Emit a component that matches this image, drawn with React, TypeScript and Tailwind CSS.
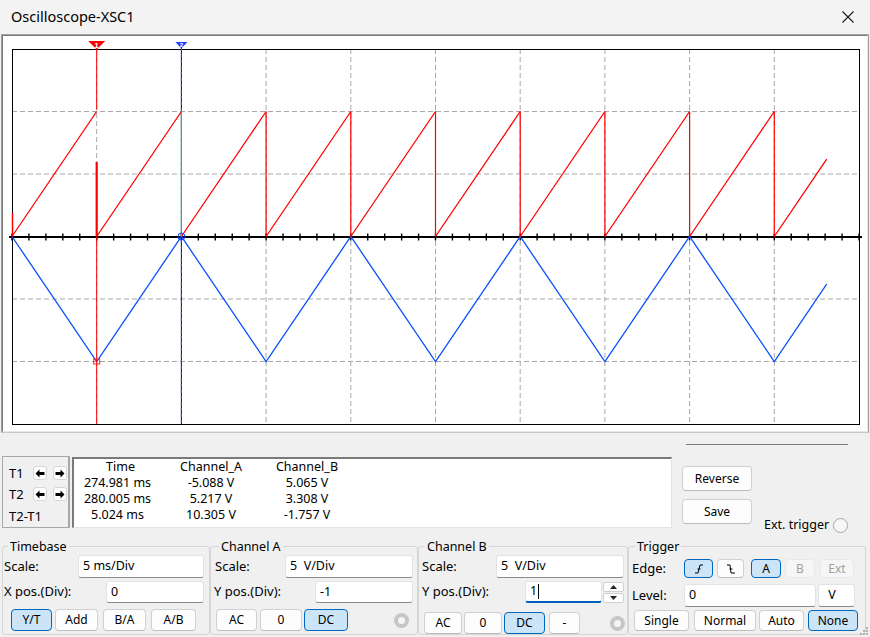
import React from "react";
import clsx from "clsx";

// plot geometry, page pixels
const X0 = 12;
const Y0 = 49;
const PW = 847;
const PH = 375;
const DX = PW / 10;
const DY = PH / 6;
const AXIS = Y0 + 3 * DY;
const PEAK = AXIS - 2 * DY;
const TROUGH = AXIS + 2 * DY;
const END_X = 826.7;
const gx = (i: number) => X0 + i * DX;

const readout = [
  ["274.981 ms", "-5.088 V", "5.065 V"],
  ["280.005 ms", "5.217 V", "3.308 V"],
  ["5.024 ms", "10.305 V", "-1.757 V"],
];

function Scope() {
  const tail = ((END_X - gx(9)) / DX) * 2 * DY;
  const ramps = Array.from({ length: 9 }, (_, k) => `M${gx(k)} ${AXIS} L${gx(k + 1)} ${PEAK}`).join(" ") +
    ` M${gx(9)} ${AXIS} L${END_X} ${AXIS - tail}`;
  const drops = [3, 4, 5, 6, 7, 8, 9].map((k) => `M${gx(k)} ${PEAK} L${gx(k)} ${AXIS}`).join(" ");
  const tri = Array.from({ length: 10 }, (_, i) => `${gx(i)},${i % 2 ? TROUGH : AXIS}`).join(" ") +
    ` ${END_X},${TROUGH - tail}`;

  return (
    <svg width={864} height={395} viewBox="3 36 864 395" className="block">
      <rect x={3} y={36} width={864} height={395} fill="#fff" />
      {[1, 2, 3, 4, 5, 6, 7, 8, 9].map((i) => (
        <line key={"v" + i} x1={gx(i)} y1={Y0} x2={gx(i)} y2={Y0 + PH} stroke="#a8a8a8" strokeDasharray="5 3" />
      ))}
      {[1, 2, 4, 5].map((j) => (
        <line key={"h" + j} x1={X0} y1={Y0 + j * DY} x2={X0 + PW} y2={Y0 + j * DY} stroke="#a8a8a8" strokeDasharray="5 3" />
      ))}
      <rect x={12.5} y={49.5} width={PW} height={PH} fill="none" stroke="#000" />
      <line x1={9} y1={AXIS + 0.5} x2={862} y2={AXIS + 0.5} stroke="#000" strokeWidth={2} />
      {Array.from({ length: 51 }, (_, i) => (
        <line key={"t" + i} x1={X0 + (i * DX) / 5} y1={233.5} x2={X0 + (i * DX) / 5} y2={240.5} stroke="#000" strokeWidth={1.4} />
      ))}

      {/* channel B */}
      <polyline points={tri} fill="none" stroke="#0a50ff" strokeWidth={1.3} />
      {/* channel A */}
      <path d={ramps} fill="none" stroke="#ff0000" strokeWidth={1.3} />
      <path d={drops} fill="none" stroke="#ff0000" strokeWidth={1.2} />
      <line x1={X0 + 0.5} y1={213} x2={X0 + 0.5} y2={AXIS} stroke="#ff0000" strokeWidth={1.5} />

      {/* cursor 2 */}
      <line x1={gx(2)} y1={48} x2={gx(2)} y2={Y0 + PH} stroke="#10104a" />
      <line x1={gx(2)} y1={48} x2={gx(2)} y2={Y0 + PH} stroke="#2a4dff" strokeDasharray="3 3" />
      <line x1={gx(2)} y1={PEAK - 1} x2={gx(2)} y2={AXIS} stroke="#22dd22" />
      <circle cx={gx(2)} cy={AXIS} r={3.5} fill="none" stroke="#1040ff" />
      <polygon points={`${gx(2) - 6},42 ${gx(2) + 6},42 ${gx(2)},48.5`} fill="#2040ff" />
      <text x={gx(2)} y={47} fontSize={6} fill="#fff" textAnchor="middle" fontFamily="Liberation Sans" fontWeight="bold">2</text>

      {/* cursor 1 */}
      <line x1={gx(1)} y1={49} x2={gx(1)} y2={PEAK - 2} stroke="#ff0000" />
      <line x1={gx(1)} y1={162} x2={gx(1)} y2={AXIS} stroke="#ff0000" strokeWidth={2.2} />
      <line x1={gx(1)} y1={AXIS} x2={gx(1)} y2={Y0 + PH} stroke="#ff0000" />
      <rect x={gx(1) - 3} y={TROUGH - 2.5} width={6} height={5} fill="none" stroke="#ff2020" />
      <polygon points={`${gx(1) - 8.5},41 ${gx(1) + 8.5},41 ${gx(1)},49.5`} fill="#ff0000" />
      <text x={gx(1)} y={47.5} fontSize={7.5} fill="#fff" textAnchor="middle" fontFamily="Liberation Sans" fontWeight="bold">1</text>
    </svg>
  );
}

function Btn({ children, className, on, off }: { children: React.ReactNode; className: string; on?: boolean; off?: boolean }) {
  return (
    <button
      type="button"
      className={clsx(
        "flex shrink-0 items-center justify-center rounded-[4px] border text-[12px] leading-none",
        on && "border-[#0067c0] bg-[#cce4f7] text-black",
        off && "border-[#e8e8e8] bg-[#f6f6f6] text-[#a0a0a0]",
        !on && !off && "border-[#d0d0d0] border-b-[#bcbcbc] bg-[#fdfdfd] text-black",
        className
      )}
    >
      {children}
    </button>
  );
}

function Field({ value, className, focus }: { value: string; className: string; focus?: boolean }) {
  return (
    <div
      className={clsx(
        "flex shrink-0 items-center rounded-[3px] border border-[#e3e3e3] bg-white pl-[4px] text-[12.5px] whitespace-pre",
        focus ? "border-b-2 border-b-[#005fb8]" : "border-b-[#8a8a8a]",
        className
      )}
    >
      {value}
      {focus && <span className="ml-px h-[15px] w-px bg-black" />}
    </div>
  );
}

function Group({ title, legendClass, className, children }: { title: string; legendClass: string; className: string; children: React.ReactNode }) {
  return (
    <div className={clsx("h-[89px] shrink-0 rounded-[3px] border border-[#d5d5d5]", className)}>
      <div className={clsx("-mt-[9px] w-fit bg-[#f0f0f0] px-[2px] text-[12.5px] leading-[17px]", legendClass)}>{title}</div>
      {children}
    </div>
  );
}

function Radio({ className }: { className: string }) {
  return (
    <div className={clsx("flex h-[15px] w-[15px] shrink-0 items-center justify-center rounded-full bg-[#c6c6c6]", className)}>
      <div className="h-[7px] w-[7px] rounded-full bg-[#f5f5f5]" />
    </div>
  );
}

function Arrow({ dir }: { dir: "l" | "r" }) {
  return (
    <div className="flex h-[14px] w-[14px] items-center justify-center rounded-[3px] border border-[#d6d6d6] bg-white">
      <svg width="10" height="9" viewBox="0 0 10 9">
        <path d={dir === "l" ? "M0.5 4.5 L4.5 0.5 V3 H9.5 V6 H4.5 V8.5 Z" : "M9.5 4.5 L5.5 0.5 V3 H0.5 V6 H5.5 V8.5 Z"} fill="#000" />
      </svg>
    </div>
  );
}

export default function App() {
  return (
    <div className="relative flex h-[637px] w-[870px] flex-col overflow-hidden bg-[#f0f0f0] font-['Noto_Sans',sans-serif] text-[13px] text-black">
      {/* title bar */}
      <div className="flex h-[34px] shrink-0 items-center bg-[#f3f3f3]">
        <span className="pl-[11px] text-[14.5px]">Oscilloscope-XSC1</span>
        <svg className="ml-auto mr-[16px]" width="12" height="12" viewBox="0 0 12 12">
          <path d="M0.5 0.5 L11.5 11.5 M11.5 0.5 L0.5 11.5" stroke="#1c1c1c" strokeWidth="1.1" />
        </svg>
      </div>

      {/* screen */}
      <div className="ml-px h-[399px] w-[868px] shrink-0 border border-[#a0a0a0] border-b-[#c8c8c8] border-r-[#a0a0a0]">
        <div className="h-full w-full border border-[#7a7a7a] border-b-[#e6e6e6] border-r-[#e6e6e6]">
          <Scope />
        </div>
      </div>

      {/* cursor readout */}
      <div className="flex h-[113px] shrink-0">
        <div className="ml-[2px] mt-[23px] flex h-[72px] w-[68px] shrink-0 flex-col border border-[#a8a8a8] border-r-2 pl-[6px] text-[13px] leading-none">
          <div className="mt-[9px] flex h-[14px] items-center">
            <span className="w-[24px]">T1</span>
            <Arrow dir="l" />
            <span className="w-[6px]" />
            <Arrow dir="r" />
          </div>
          <div className="mt-[7px] flex h-[14px] items-center">
            <span className="w-[24px]">T2</span>
            <Arrow dir="l" />
            <span className="w-[6px]" />
            <Arrow dir="r" />
          </div>
          <div className="mt-[8px] flex h-[14px] items-center">T2-T1</div>
        </div>

        <div className="ml-[2px] mt-[24px] h-[71px] w-[600px] shrink-0 border-b border-l-2 border-r border-t-2 border-b-[#e3e3e3] border-l-[#7a7a7a] border-r-[#e3e3e3] border-t-[#7a7a7a] bg-white text-[12.5px] leading-[16px]">
          <div className="grid grid-cols-[87px_100px_92px]">
            <div className="pl-[6px] text-center">Time</div>
            <div className="text-center">Channel_A</div>
            <div className="text-center">Channel_B</div>
            {readout.map((r) =>
              r.map((c, i) => (
                <div key={r[0] + i} className="text-center">
                  {c}
                </div>
              ))
            )}
          </div>
        </div>

        <div className="ml-[10px] flex shrink-0 flex-col">
          <div className="ml-[4px] mt-[11px] h-px w-[162px] bg-[#7a7a7a]" />
          <Btn className="mt-[21px] h-[25px] w-[70px] text-[12.5px]">Reverse</Btn>
          <div className="mt-[8px] flex">
            <Btn className="h-[25px] w-[70px] text-[12.5px]">Save</Btn>
            <div className="ml-[12px] mt-[18px] flex h-[16px] items-center text-[12.5px]">
              <span>Ext. trigger</span>
              <div className="ml-[4px] h-[15px] w-[15px] rounded-full border border-[#a8a8a8] bg-[#f7f7f7]" />
            </div>
          </div>
        </div>
      </div>

      {/* controls */}
      <div className="flex shrink-0">
        <Group title="Timebase" legendClass="ml-[5px]" className="ml-[2px] w-[208px]">
          <div className="flex h-[23px] items-center">
            <span className="pl-[1px]">Scale:</span>
            <Field value="5 ms/Div" className="ml-auto mr-[5px] h-[23px] w-[126px]" />
          </div>
          <div className="mt-[3px] flex h-[22px] items-center">
            <span className="pl-[1px]">X pos.(Div):</span>
            <Field value="0" className="ml-auto mr-[5px] h-[22px] w-[98px]" />
          </div>
          <div className="mt-[6px] flex pl-[8px]">
            <Btn on className="h-[22px] w-[41px]">Y/T</Btn>
            <Btn className="ml-[3px] h-[22px] w-[43px]">Add</Btn>
            <Btn className="ml-[5px] h-[22px] w-[43px]">B/A</Btn>
            <Btn className="ml-[5px] h-[22px] w-[45px]">A/B</Btn>
          </div>
        </Group>

        <Group title="Channel A" legendClass="ml-[8px]" className="w-[208px]">
          <div className="flex h-[23px] items-center">
            <span className="pl-[4px]">Scale:</span>
            <Field value="5  V/Div" className="ml-auto mr-[4px] h-[23px] w-[128px]" />
          </div>
          <div className="mt-[3px] flex h-[22px] items-center">
            <span className="pl-[3px]">Y pos.(Div):</span>
            <Field value="-1" className="ml-auto mr-[4px] h-[22px] w-[98px]" />
          </div>
          <div className="mt-[6px] flex items-center pl-[5px]">
            <Btn className="h-[22px] w-[41px]">AC</Btn>
            <Btn className="ml-[3px] h-[22px] w-[42px]">0</Btn>
            <Btn on className="ml-[2px] h-[22px] w-[44px]">DC</Btn>
            <Radio className="ml-auto mr-[8px]" />
          </div>
        </Group>

        <Group title="Channel B" legendClass="ml-[6px]" className="w-[210px]">
          <div className="flex h-[23px] items-center">
            <span className="pl-[3px]">Scale:</span>
            <Field value="5  V/Div" className="ml-auto mr-[3px] h-[23px] w-[128px]" />
          </div>
          <div className="mt-[3px] flex h-[22px] items-center">
            <span className="pl-[3px]">Y pos.(Div):</span>
            <Field focus value="1" className="ml-auto h-[22px] w-[77px]" />
            <div className="ml-px mr-[3px] flex w-[21px] flex-col gap-px">
              <div className="flex h-[10px] items-center justify-center rounded-[2px] border border-[#d0d0d0] bg-[#fdfdfd]">
                <svg width="7" height="4" viewBox="0 0 7 4"><path d="M0 4 L3.5 0 L7 4 Z" fill="#222" /></svg>
              </div>
              <div className="flex h-[10px] items-center justify-center rounded-[2px] border border-[#d0d0d0] bg-[#fdfdfd]">
                <svg width="7" height="4" viewBox="0 0 7 4"><path d="M0 0 L3.5 4 L7 0 Z" fill="#222" /></svg>
              </div>
            </div>
          </div>
          <div className="mt-[9px] flex items-center pl-[5px]">
            <Btn className="h-[22px] w-[38px]">AC</Btn>
            <Btn className="ml-[2px] h-[22px] w-[38px]">0</Btn>
            <Btn on className="ml-[2px] h-[22px] w-[41px]">DC</Btn>
            <Btn className="ml-[4px] h-[22px] w-[31px]">-</Btn>
            <Radio className="ml-auto mr-[2px]" />
          </div>
        </Group>

        <Group title="Trigger" legendClass="ml-[6px]" className="w-[238px]">
          <div className="mt-[4px] flex h-[19px] items-center">
            <span className="w-[55px] shrink-0 pl-[3px]">Edge:</span>
            <Btn on className="h-[19px] w-[29px]">
              <svg width="10" height="10" viewBox="0 0 10 10">
                <path d="M1 9 H4 L6 1 H9 M3.5 5 H6.5" fill="none" stroke="#000" strokeWidth="1" />
              </svg>
            </Btn>
            <Btn className="ml-[4px] h-[19px] w-[27px]">
              <svg width="10" height="10" viewBox="0 0 10 10">
                <path d="M1 1 H4 L5 9 H9 M3.5 5 H6.5" fill="none" stroke="#000" strokeWidth="1" />
              </svg>
            </Btn>
            <Btn on className="ml-[7px] h-[19px] w-[30px]">A</Btn>
            <Btn off className="ml-[4px] h-[19px] w-[30px]">B</Btn>
            <Btn off className="ml-[5px] h-[19px] w-[34px]">Ext</Btn>
          </div>
          <div className="mt-[6px] flex h-[23px] items-center">
            <span className="w-[55px] shrink-0 pl-[3px]">Level:</span>
            <Field value="0" className="h-[23px] w-[132px]" />
            <Field value=" V" className="ml-[2px] h-[23px] w-[37px] pl-[6px]" />
          </div>
          <div className="mt-[3px] flex pl-[5px]">
            <Btn className="h-[21px] w-[55px]">Single</Btn>
            <Btn className="ml-[5px] h-[21px] w-[62px]">Normal</Btn>
            <Btn className="ml-[3px] h-[21px] w-[45px]">Auto</Btn>
            <Btn on className="ml-[4px] h-[21px] w-[50px]">None</Btn>
          </div>
        </Group>
      </div>

      {/* resize grip */}
      <svg className="absolute bottom-[2px] right-[2px]" width="8" height="8" viewBox="0 0 8 8">
        <g fill="#b0b0b0">
          <rect x="6" y="0" width="2" height="2" />
          <rect x="3" y="3" width="2" height="2" />
          <rect x="6" y="3" width="2" height="2" />
          <rect x="0" y="6" width="2" height="2" />
          <rect x="3" y="6" width="2" height="2" />
          <rect x="6" y="6" width="2" height="2" />
        </g>
      </svg>
    </div>
  );
}
